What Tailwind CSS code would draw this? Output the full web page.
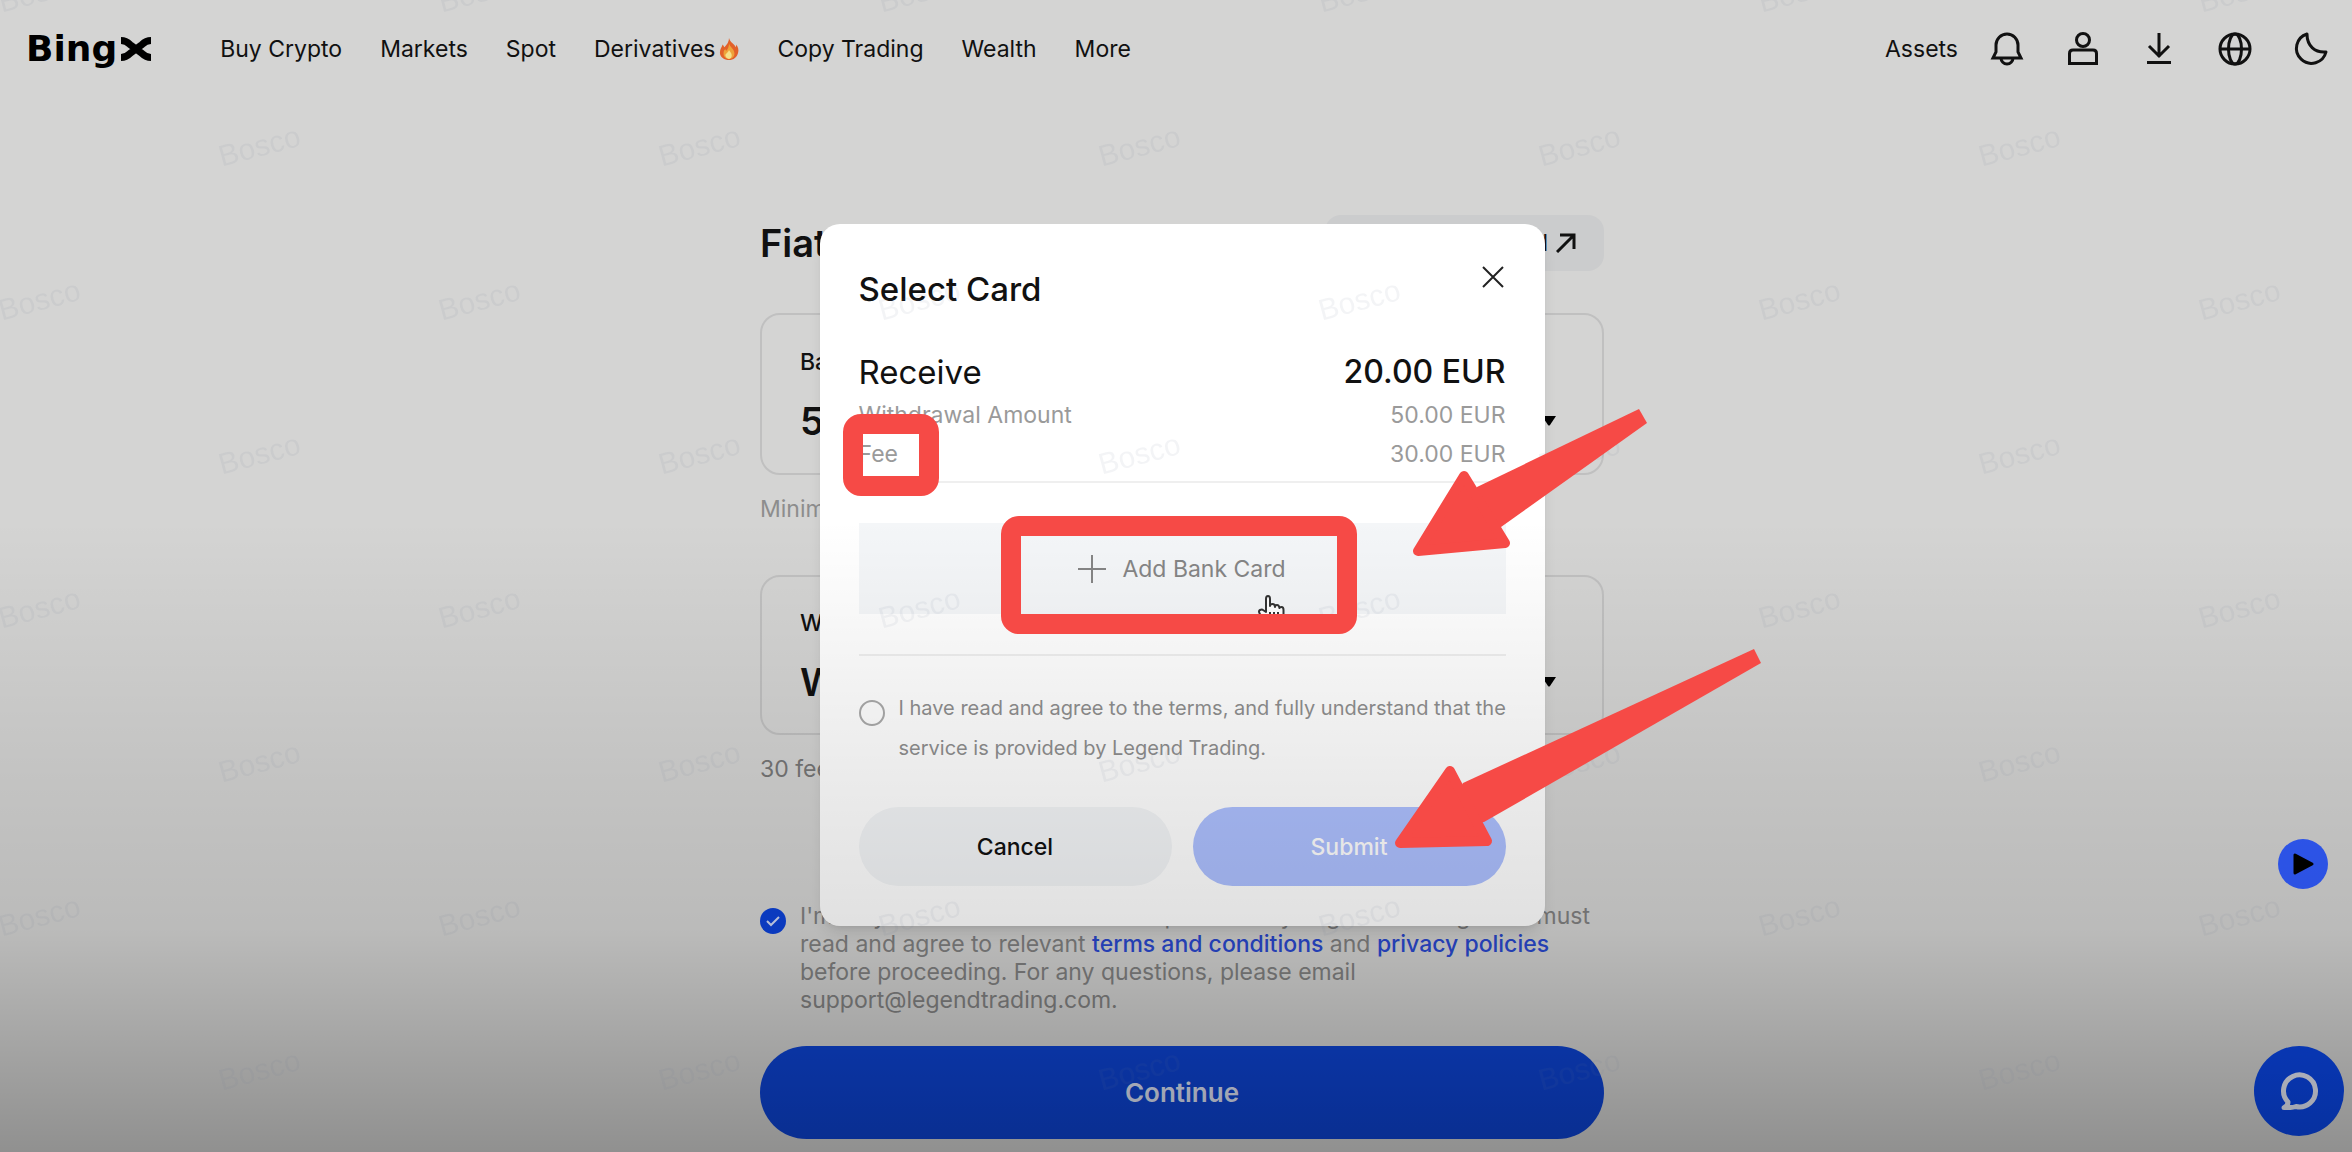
<!doctype html>
<html lang="en">
  <head>
    <title>BingX - Select Card</title>
    <meta charset="UTF-8" />
    <meta name="viewport" content="width=device-width, initial-scale=1" />
    <script src="https://cdn.jsdelivr.net/npm/@tailwindcss/browser@4"></script>
  </head>
  <body class="bg-[#d4d4d3] font-['Inter','Liberation_Sans',sans-serif] text-[23px] leading-7 text-[#111]">
    <div class="relative min-h-screen overflow-hidden">
      <header class="flex h-[98px] items-center justify-between pr-[23px] pl-[26px]">
        <div class="flex items-center">
          <a href="#" class="flex items-center gap-1 font-['DejaVu_Sans',sans-serif] text-[36px] leading-10 font-bold text-black" aria-label="BingX">
            <span>Bing</span>
            <svg class="h-6 w-[30px]" viewBox="0 0 30 24" fill="none" stroke="#000" stroke-width="7">
              <path d="M0 3.500q5 0 9 4l12 9q4 4 9 4M30 3.500q-5 0-9 4l-12 9q-4 4-9 4" />
            </svg>
          </a>
          <nav class="ml-[69px] flex items-center gap-[38px]">
            <a href="#">Buy Crypto</a>
            <a href="#">Markets</a>
            <a href="#">Spot</a>
            <a href="#" class="flex items-center gap-1">
              Derivatives
              <svg class="h-6 w-5" viewBox="0 0 22 24">
                <path d="M11 0c1 5 7 7 7 10 1-1 1-2 1-3 2 3 3 6 2 9-1 5-5 8-10 8S1 21 1 16c0-4 2-6 3-9 1 1 1 2 2 3 3-3 5-6 5-10z" fill="#e2612a" />
                <path d="M11 6c1 4 6 6 6 11 0 4-3 6-6 6s-6-2-6-6c0-3 1-4 2-5 0 1 1 2 1 2 2-2 3-5 3-8z" fill="#eea23a" />
                <path d="M11 13c1 2 3 3 3 6 0 2-1 4-3 4s-4-2-4-4 3-3 4-6z" fill="#f5e08a" />
              </svg>
            </a>
            <a href="#">Copy Trading</a>
            <a href="#">Wealth</a>
            <a href="#">More</a>
          </nav>
        </div>
        <div class="flex items-center gap-10">
          <a href="#" class="-mr-[9px]">Assets</a>
          <button type="button" aria-label="Notifications">
            <svg class="size-9" viewBox="0 0 36 36" fill="none" stroke="#111" stroke-width="3">
              <path d="M4 27h28l-3-6v-7a11 11 0 0 0-22 0v7z" />
              <path d="M12 27a6 6 0 0 0 12 0" />
            </svg>
          </button>
          <button type="button" aria-label="Account">
            <svg class="size-9" viewBox="0 0 36 36" fill="none" stroke="#111" stroke-width="3">
              <circle cx="18" cy="9" r="6.500" />
              <path d="M4.500 32.500v-10q0-3.500 3.500-3.500h20q3.500 0 3.500 3.500v10z" />
            </svg>
          </button>
          <button type="button" aria-label="Download">
            <svg class="size-9" viewBox="0 0 36 36" fill="none" stroke="#111" stroke-width="3">
              <path d="M18 2v24M8 15l10 10 10-10M6 31.500h24" />
            </svg>
          </button>
          <button type="button" aria-label="Language">
            <svg class="size-9" viewBox="0 0 36 36" fill="none" stroke="#111" stroke-width="3">
              <circle cx="18" cy="18" r="15" />
              <ellipse cx="18" cy="18" rx="6.500" ry="15" />
              <path d="M3 18h30" />
            </svg>
          </button>
          <button type="button" aria-label="Dark mode">
            <svg class="size-9" viewBox="0 0 36 36" fill="none" stroke="#111" stroke-width="3" stroke-linejoin="round">
              <path d="M14 3a15 15 0 1 0 19 18C22 22 14 15 14 3z" />
            </svg>
          </button>
        </div>
      </header>

      <main class="mt-[117px] ml-3 flex justify-center">
        <div class="w-full max-w-[844px]">
          <div class="flex items-center justify-between">
            <h1 class="text-[38px] leading-[56px] font-semibold">Fiat Withdrawal</h1>
            <a href="#" class="flex h-14 min-w-[279px] items-center justify-end gap-2 rounded-2xl bg-[#cbcccd] pr-7">
              Withdrawal Tutorial
              <svg class="size-5" viewBox="0 0 20 20" fill="none" stroke="#111" stroke-width="3"><path d="M1 19 18 2M4 2h14v14" /></svg>
            </a>
          </div>

          <section class="mt-[42px] flex h-[162px] flex-col justify-center gap-[25px] rounded-[20px] border-2 border-[#c0c0c0] pr-[45px] pl-[38px]">
            <h2 class="font-medium">Balance</h2>
            <div class="flex items-center justify-between text-[38px] leading-10 font-semibold">
              <span>50</span>
              <div class="flex items-center gap-2 text-[22px]">
                <select aria-label="Currency" class="appearance-none"><option>EUR</option></select>
                <svg class="h-3 w-4" viewBox="0 0 16 12"><path d="M1 1h14l-6 9q-1 1-2 0z" /></svg>
              </div>
            </div>
          </section>
          <p class="mt-5 text-[#8d8d8d]">Minimum 50 EUR</p>

          <section class="mt-[52px] flex h-[160px] flex-col justify-center gap-[25px] rounded-[20px] border-2 border-[#c0c0c0] pr-[45px] pl-[38px]">
            <h2 class="font-medium">Withdraw with</h2>
            <div class="flex items-center justify-between text-[38px] leading-10 font-semibold">
              <span>Wallet</span>
              <div class="flex items-center gap-2 text-[22px]">
                <select aria-label="Method" class="appearance-none"><option>Card</option></select>
                <svg class="h-3 w-4" viewBox="0 0 16 12"><path d="M1 1h14l-6 9q-1 1-2 0z" /></svg>
              </div>
            </div>
          </section>
          <p class="mt-5 text-[#777]">30 fee</p>

          <div class="mt-[119px] flex gap-[14px]">
            <div class="relative mt-[6px] size-[26px] shrink-0">
              <input id="terms" type="checkbox" checked class="block size-[26px] appearance-none rounded-full bg-[#0c42d8]" />
              <svg class="pointer-events-none absolute inset-0" viewBox="0 0 26 26" fill="none" stroke="#cfd8f5" stroke-width="2"><path d="m7 13 4 4 8-8" /></svg>
            </div>
            <div class="whitespace-nowrap text-[#818181]">
              <label for="terms">I'm fully aware that the service is provided by Legend Trading and I must<br />read and agree to relevant</label>
              <a href="#" class="font-medium text-[#2a49cf]">terms and conditions</a> and
              <a href="#" class="font-medium text-[#2a49cf]">privacy policies</a><br />
              before proceeding. For any questions, please email<br />support@legendtrading.com.
            </div>
          </div>
          <button type="button" class="mt-8 h-[93px] w-full rounded-full bg-[#0d43d2] text-[26px] font-semibold text-[#dce2f5]">Continue</button>
        </div>
      </main>

      <!-- Dialog -->
      <div class="absolute inset-x-0 top-0 bottom-0.5 ml-3 flex items-center justify-center">
        <form role="dialog" aria-labelledby="dialog-title" class="relative w-full max-w-[725px] rounded-[20px] bg-white px-[39px] pt-[45px] pb-10 shadow-lg">
          <div class="flex justify-between">
            <h2 id="dialog-title" class="text-[33px] leading-10 font-medium">Select Card</h2>
            <button type="button" aria-label="Close" class="-mt-1 flex h-6 items-center">
              <svg class="size-6" viewBox="0 0 24 24" fill="none" stroke="#222" stroke-width="2"><path d="m1 2 20 20M21 2 1 22" /></svg>
            </button>
          </div>
          <dl class="mt-[39px] border-b-2 border-[#efefef] pb-[7px] leading-[39px] text-[#9a9a9a]">
            <div class="flex justify-between text-[33px] leading-[48px] text-[#111]">
              <dt>Receive</dt>
              <dd class="text-[32px] font-medium">20.00 EUR</dd>
            </div>
            <div class="flex justify-between">
              <dt>Withdrawal Amount</dt>
              <dd>50.00 EUR</dd>
            </div>
            <div class="flex justify-between">
              <dt>Fee</dt>
              <dd>30.00 EUR</dd>
            </div>
          </dl>
          <button type="button" class="mt-10 flex h-[91px] w-full items-center justify-center gap-4 bg-[#f4f6f8] text-[#858585]">
            <svg class="size-7" viewBox="0 0 28 28" stroke="currentColor" stroke-width="2"><path d="M14 0v28M0 14h28" /></svg>
            Add Bank Card
          </button>
          <hr class="mt-10 border-t-2 border-[#efefef]" />
          <div class="mt-8 flex gap-[14px]">
            <input id="agree" type="radio" class="mt-3 size-[26px] shrink-0 appearance-none rounded-full border-2 border-[#aaa]" />
            <label for="agree" class="text-[20px] leading-10 whitespace-nowrap text-[#8f8f8f]">I have read and agree to the terms, and fully understand that the<br />service is provided by Legend Trading.</label>
          </div>
          <div class="mt-[39px] grid grid-cols-2 gap-[21px]">
            <button type="button" class="h-[79px] rounded-full bg-[#f3f5f7] font-medium">Cancel</button>
            <button type="submit" class="h-[79px] rounded-full bg-[#adc0ff] font-medium text-white">Submit</button>
          </div>

          <!-- Hand pointer -->
          <svg class="pointer-events-none absolute top-[370px] left-[437px] h-8 w-7" viewBox="0 0 28 32" fill="#fff" stroke="#333" stroke-width="2" stroke-linejoin="round">
            <path d="M9 18V5q0-3 2-3t2 3v7q0-2 2.500-2t2.500 3q0-2 2-2t2.500 3q0-1 2-1t2 3v6q0 5-4 8H10l-7-10q-2-3 0-4t3 0z" />
            <path d="M13 18v6M17 18v6M21 18v6" />
          </svg>

          <!-- Marks -->
          <div class="pointer-events-none absolute top-[190px] left-[23px] z-30 h-[82px] w-24 rounded-[18px] border-[20px] border-[#f64a46]"></div>
          <div class="pointer-events-none absolute top-[292px] left-[181px] z-30 h-[118px] w-[356px] rounded-[18px] border-[20px] border-[#f64a46]"></div>
          <svg class="pointer-events-none absolute top-0 left-0 z-30 h-[702px] w-[960px]" viewBox="0 0 960 702" fill="#f64a46" stroke="#f64a46" stroke-linejoin="round">
            <path d="M819 185 827 199 681 303 640 310 657 263z" stroke="none" />
            <path d="M598 327 644 252 685 319z" stroke-width="10" />
            <path d="M934 425 941 439 664 598 620 605 643 559z" stroke="none" />
            <path d="M580 619 630 547 667 617z" stroke-width="10" />
          </svg>
        </form>
      </div>

      <button type="button" aria-label="Play video" class="absolute right-6 bottom-[263px] flex size-[50px] items-center justify-center rounded-full bg-[#315cff]">
        <svg class="size-6" viewBox="0 0 24 24" stroke="#000" stroke-width="3" stroke-linejoin="round"><path d="M4 3v18l17-9z" /></svg>
      </button>
      <button type="button" aria-label="Chat" class="absolute right-2 bottom-4 flex size-[90px] items-center justify-center rounded-full bg-[#0a46e6]">
        <svg class="size-10" viewBox="0 0 40 40" fill="none" stroke="#e4e8f6" stroke-width="5" stroke-linejoin="round">
          <path d="M9 31a16 16 0 1 1 8 4.500q-3 1-5.500 1H5q4-1.500 4-5.500z" />
        </svg>
      </button>

      <!-- Shade at the bottom of the frame -->
      <div class="pointer-events-none absolute inset-x-0 bottom-0 z-10 flex h-[632px] flex-col">
        <div class="h-[260px] bg-linear-to-b from-black/0 to-black/8"></div>
        <div class="h-[150px] bg-linear-to-b from-black/8 to-black/12"></div>
        <div class="grow bg-linear-to-b from-black/12 to-black/32"></div>
      </div>

      <!-- Watermark -->
      <svg class="pointer-events-none absolute inset-0 z-20 size-full" aria-hidden="true">
        <pattern id="mark" x="-72" y="-84" width="440" height="308" patternUnits="userSpaceOnUse">
          <g class="fill-slate-500/8 font-['Liberation_Sans',sans-serif] text-[30px]" text-anchor="middle">
            <text transform="translate(114 86) rotate(-15)">Bosco</text>
            <text transform="translate(334 240) rotate(-15)">Bosco</text>
          </g>
        </pattern>
        <rect width="100%" height="100%" fill="url(#mark)" />
      </svg>
    </div>
  </body>
</html>
